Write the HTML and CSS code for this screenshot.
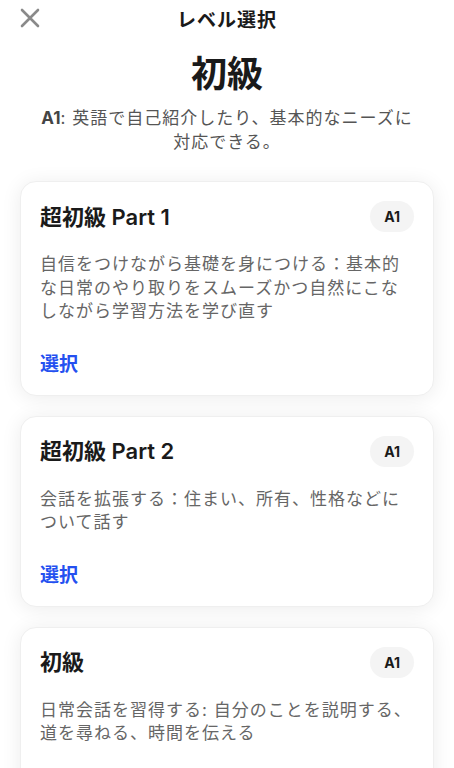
FILE: index.html
```html
<!DOCTYPE html>
<html lang="ja">
<head>
  <meta charset="UTF-8">
  <meta name="viewport" content="width=device-width, initial-scale=1.0">
  <title>レベル選択</title>
  <link rel="stylesheet" href="styles.css">
</head>
<body>

<div id="levels">
  <header class="topbar">
    <button class="close" aria-label="閉じる">
      <svg width="20" height="20" viewBox="0 0 20 20">
        <path d="M2 2 L18 18 M18 2 L2 18" stroke="#8a8a8a" stroke-width="2.6" stroke-linecap="round"/>
      </svg>
    </button>
    <h1 class="topbar-title">レベル選択</h1>
  </header>

  <section class="intro">
    <h2 class="level-name">初級</h2>
    <p class="level-desc"><b>A1</b>: 英語で自己紹介したり、基本的なニーズに対応できる。</p>
  </section>

  <div class="card">
    <div class="card-head">
      <h3>超初級 Part 1</h3>
      <span class="badge">A1</span>
    </div>
    <p class="card-text">自信をつけながら基礎を身につける：基本的な日常のやり取りをスムーズかつ自然にこなしながら学習方法を学び直す</p>
    <a class="select" href="#">選択</a>
  </div>

  <div class="card">
    <div class="card-head">
      <h3>超初級 Part 2</h3>
      <span class="badge">A1</span>
    </div>
    <p class="card-text">会話を拡張する：住まい、所有、性格などについて話す</p>
    <a class="select" href="#">選択</a>
  </div>

  <div class="card">
    <div class="card-head">
      <h3>初級</h3>
      <span class="badge">A1</span>
    </div>
    <p class="card-text">日常会話を習得する: 自分のことを説明する、道を尋ねる、時間を伝える</p>
    <a class="select" href="#">選択</a>
  </div>
</div>

</body>
</html>
```

FILE: styles.css
```css
body {
  margin: 0;
  font-family: Inter, "Noto Sans CJK JP", sans-serif;
  background-color: #fff;
  color: #1a1a1a;
}

#levels {
  padding: 0 20px 20px;
}

.topbar {
  position: relative;
  height: 36px;
  display: flex;
  align-items: center;
  justify-content: center;
}

.close {
  position: absolute;
  left: 0;
  top: 8px;
  padding: 0;
  border: none;
  background: none;
  width: 20px;
  height: 20px;
  cursor: pointer;
}

.topbar-title {
  margin: 0;
  font-size: 19px;
  font-weight: 700;
  letter-spacing: 1px;
}

.intro {
  text-align: center;
  padding: 14px 0 27px;
}

.level-name {
  margin: 0 0 8px;
  font-size: 36px;
  font-weight: 700;
  line-height: 48px;
}

.level-desc {
  margin: 0 auto;
  max-width: 384px;
  font-size: 17px;
  letter-spacing: 1px;
  line-height: 24px;
  color: #555;
}

.level-desc b {
  color: #444;
  letter-spacing: 0;
}

.card {
  background-color: #fff;
  border-radius: 16px;
  padding: 19px 19px 18px;
  margin-bottom: 20px;
  box-shadow: 0 2px 20px rgba(0, 0, 0, 0.08);
  border: 1px solid #efefef;
}

.card-head {
  display: flex;
  justify-content: space-between;
  align-items: center;
}

.card-head h3 {
  margin: 0;
  font-size: 22px;
  font-weight: 600;
  line-height: 30px;
}

.badge {
  background-color: #f4f4f4;
  border-radius: 16px;
  padding: 0 14px;
  height: 31px;
  line-height: 31px;
  font-size: 14px;
  font-weight: 700;
}

.card-text {
  margin: 21px 0 0;
  font-size: 17px;
  letter-spacing: 1px;
  line-height: 23.5px;
  color: #666;
}

.select {
  display: inline-block;
  margin-top: 29px;
  font-size: 19px;
  font-weight: 700;
  line-height: 24px;
  color: #2450f0;
  text-decoration: none;
}
```
